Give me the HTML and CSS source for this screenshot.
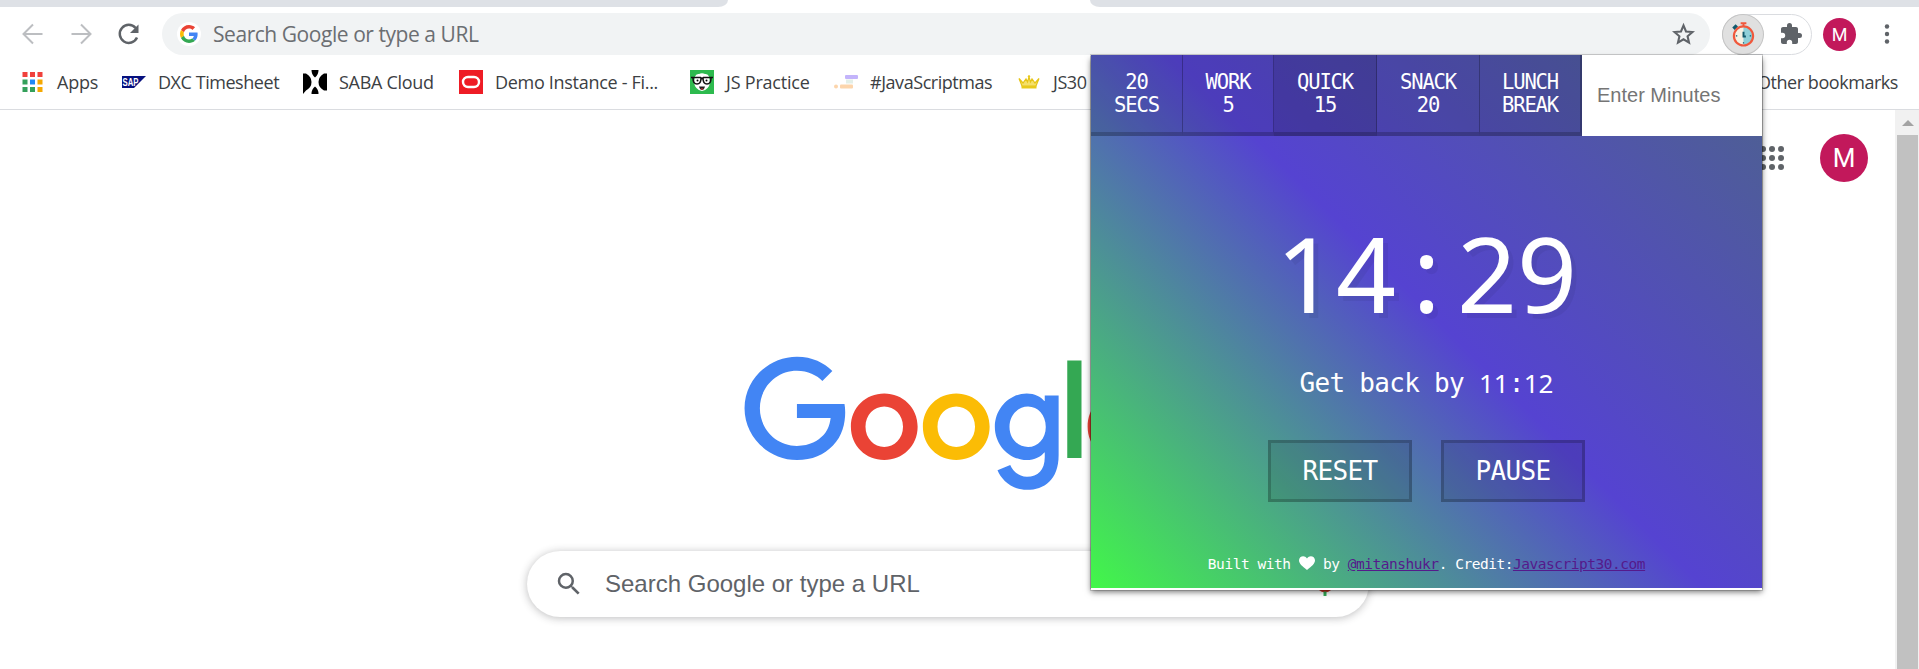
FILE: index.html
```
<!DOCTYPE html>
<html lang="en">
<head>
<meta charset="utf-8">
<title>New Tab</title>
<link rel="stylesheet" href="styles.css">
</head>
<body>
<div class="browser">
  <div class="tabs"><div class="tabs-left"></div><div class="tabs-right"></div></div>
  <div class="toolbar">
    <svg class="nav back" viewBox="0 0 24 24"><path d="M21.500 12H3M12 2.500 2.500 12l9.500 9.500" fill="none" stroke="#bcbec1" stroke-width="2"/></svg>
    <svg class="nav forward" viewBox="0 0 24 24"><path d="M2.500 12H21M12 2.500 21.500 12 12 21.500" fill="none" stroke="#bcbec1" stroke-width="2"/></svg>
    <svg class="nav reload" viewBox="0 0 24 24"><path d="M20 15.500A9 9 0 1 1 18.600 6" fill="none" stroke="#5f6368" stroke-width="2.500"/><path d="M21.500 2.500v8.500H13z" fill="#5f6368"/></svg>
    <div class="omnibox">
      <span class="gdisc"><svg viewBox="0 0 48 48"><path fill="#ea4335" d="M24 9.500c3.540 0 6.710 1.220 9.210 3.600l6.850-6.850C35.900 2.380 30.470 0 24 0 14.620 0 6.510 5.380 2.560 13.220l7.980 6.190C12.430 13.720 17.740 9.500 24 9.500z"/><path fill="#4285f4" d="M46.980 24.550c0-1.570-.15-3.090-.38-4.550H24v9.020h12.940c-.58 2.960-2.260 5.480-4.780 7.180l7.730 6c4.510-4.180 7.090-10.360 7.090-17.650z"/><path fill="#fbbc05" d="M10.530 28.590c-.48-1.450-.76-2.990-.76-4.590s.27-3.140.76-4.590l-7.980-6.190C.92 16.460 0 20.120 0 24s.92 7.540 2.560 10.780z"/><path fill="#34a853" d="M24 48c6.480 0 11.930-2.130 15.890-5.810l-7.730-6c-2.150 1.450-4.920 2.300-8.160 2.300-6.260 0-11.570-4.220-13.470-9.910l-7.980 6.190C6.510 42.620 14.620 48 24 48z"/></svg></span>
      <span class="omni-text">Search Google or type a URL</span>
      <svg class="star" viewBox="0 0 24 24"><path d="M12 3.300l2.400 5.800 6.200.5-4.700 4.100 1.400 6.100L12 16.600 6.700 19.800l1.400-6.100L3.400 9.600l6.200-.5z" fill="none" stroke="#5f6368" stroke-width="2"/></svg>
    </div>
    <div class="extensions">
      <span class="ext-active"><svg viewBox="0 0 24 26"><path d="M9 1.200h6M12 1v4" stroke="#f0583c" stroke-width="2"/><path d="M1.500 7 5 3.500" stroke="#115a6d" stroke-width="3.500"/><path d="M12 5a9.500 9.500 0 0 0 0 19z" fill="#f5f1e3"/><path d="M12 5a9.500 9.500 0 0 1 0 19z" fill="#8fd0d9"/><circle cx="12" cy="14.500" r="10" fill="none" stroke="#f0583c" stroke-width="2.300"/><path d="M12 10v5h2.500" stroke="#115a6d" stroke-width="2" fill="none"/><path d="M4 14.500h1.500M18.500 14.500H20M12 21v1.500" stroke="#115a6d" stroke-width="1.300"/></svg></span>
      <svg class="puzzle" viewBox="0 0 24 24"><path fill="#5f6368" d="M20.500 11H19V7c0-1.100-.9-2-2-2h-4V3.500a2.500 2.500 0 0 0-5 0V5H4c-1.100 0-2 .9-2 2v3.800h1.500a2.700 2.700 0 0 1 0 5.400H2V20c0 1.100.9 2 2 2h3.800v-1.500a2.700 2.700 0 0 1 5.400 0V22H17c1.100 0 2-.9 2-2v-4h1.500a2.500 2.500 0 0 0 0-5z"/></svg>
    </div>
    <span class="avatar small">M</span>
    <svg class="menu" viewBox="0 0 6 20"><circle cx="3" cy="2.500" r="2.200"/><circle cx="3" cy="10" r="2.200"/><circle cx="3" cy="17.500" r="2.200"/></svg>
  </div>
  <div class="bookmarks">
    <svg class="bi apps" viewBox="0 0 20 20"><path fill="#f0413c" d="M0 0h5v5H0zM7.500 0h5v5h-5zM15 0h5v5h-5z"/><path fill="#34a05a" d="M0 7.500h5v5H0zM0 15h5v5H0zM7.500 15h5v5h-5z"/><path fill="#1e88f5" d="M7.500 7.500h5v5h-5z"/><path fill="#f5a800" d="M15 7.500h5v5h-5zM15 15h5v5h-5z"/></svg>
    <span class="bt b1">Apps</span>
    <svg class="bi sap" viewBox="0 0 24 12"><path fill="#06107e" d="M0 0h24L12 12H0z"/><text x="0.500" y="9.800" textLength="16" lengthAdjust="spacingAndGlyphs" fill="#fff" class="saptext">SAP</text></svg>
    <span class="bt b2">DXC Timesheet</span>
    <svg class="bi saba" viewBox="0 0 24 24"><path d="M0 3.500h3q5.500 3 5.500 8.500T3 20.500L0 24zM24 3.500h-3q-5.500 3-5.500 8.500t5.500 8.500h3zM8.500 0h7q0 5-3.500 7.500Q8.500 5 8.500 0zM8.500 24h7q0-5-3.500-7.500Q8.500 19 8.500 24z"/></svg>
    <span class="bt b3">SABA Cloud</span>
    <svg class="bi demo" viewBox="0 0 24 24"><path fill="#ee1c25" d="M0 0h24v24H0z"/><rect x="4" y="7" width="16" height="10" rx="5" fill="none" stroke="#fff" stroke-width="2.400"/></svg>
    <span class="bt b4">Demo Instance - Fi...</span>
    <svg class="bi jsp" viewBox="0 0 24 24"><path fill="#2dba4e" d="M0 0h24v24H0z"/><path fill="#fff" d="M5 6.500q1-3 4-2.500 3-1.500 6 0 3-.5 4 2.500l1 6q-1 7-8 8.500-7-1.500-8-8.500z"/><path d="M1 7.500h9.500l1.500 1 1.500-1H23M3 8q0 6 4 6t4-6M13 8q0 6 4 6t4-6" fill="none" stroke="#111" stroke-width="1.500"/><circle cx="7.500" cy="10.500" r="1"/><circle cx="16.500" cy="10.500" r="1"/><path d="M9 16.500h6q-1 3.500-3 3.500t-3-3.500z" fill="#222"/><path d="M10.500 18.500h3l-1.500 1.500z" fill="#e33"/></svg>
    <span class="bt b5">JS Practice</span>
    <svg class="bi jsm" viewBox="0 0 24 14"><rect x="11" y="0" width="13" height="4" rx="1" fill="#c3b4fb"/><rect x="12" y="4.500" width="7" height="4" fill="#e3efe8"/><rect x="6" y="9.500" width="13" height="4" rx="1" fill="#fcd5ac"/><circle cx="2" cy="11.500" r="2" fill="#fcd5ac"/></svg>
    <span class="bt b6">#JavaScriptmas</span>
    <svg class="bi crown" viewBox="0 0 24 14"><path d="M2 3.500 6 8l3-4 1.500 3L12 2l1.500 5L15 4l3 4 4-4.500-3 7.500H5z" fill="#f5e06a" stroke="#e6c416" stroke-width="1.200"/><path fill="#e9ca1c" d="M4.500 11h15v2.500h-15z"/><circle cx="12" cy="1.500" r="1.200" fill="#e9ca1c"/></svg>
    <span class="bt b7">JS30</span>
    <span class="bt other">Other bookmarks</span>
  </div>
  <div class="page">
    <div class="content">
      <div class="logo">
        <svg viewBox="0 0 272 92"><path fill="#ea4335" d="M115.750 47.180c0 12.770-9.990 22.180-22.250 22.180s-22.250-9.410-22.250-22.180C71.250 34.320 81.240 25 93.500 25s22.250 9.320 22.250 22.180zm-9.740 0c0-7.980-5.790-13.440-12.510-13.440S80.990 39.200 80.990 47.180c0 7.900 5.790 13.440 12.510 13.440s12.510-5.550 12.510-13.440z"/><path fill="#fbbc05" d="M163.750 47.180c0 12.770-9.990 22.180-22.250 22.180s-22.250-9.410-22.250-22.180c0-12.850 9.990-22.180 22.250-22.180s22.250 9.320 22.250 22.180zm-9.740 0c0-7.980-5.790-13.440-12.510-13.440s-12.510 5.460-12.510 13.440c0 7.900 5.790 13.440 12.510 13.440s12.510-5.550 12.510-13.440z"/><path fill="#4285f4" d="M209.750 26.340v39.820c0 16.380-9.660 23.070-21.080 23.070-10.750 0-17.220-7.190-19.660-13.070l8.480-3.530c1.510 3.610 5.210 7.870 11.170 7.870 7.310 0 11.840-4.510 11.840-13v-3.190h-.34c-2.180 2.690-6.380 5.040-11.680 5.040-11.090 0-21.250-9.660-21.250-22.090 0-12.520 10.160-22.260 21.250-22.260 5.290 0 9.490 2.350 11.680 4.960h.34v-3.610h9.250zm-8.560 20.920c0-7.810-5.210-13.520-11.840-13.520-6.720 0-12.350 5.710-12.350 13.520 0 7.730 5.630 13.360 12.350 13.360 6.630 0 11.840-5.630 11.840-13.360z"/><path fill="#34a853" d="M225 3v65h-9.500V3z"/><path fill="#ea4335" d="M262.020 54.480l7.560 5.040c-2.440 3.610-8.320 9.830-18.480 9.830-12.600 0-22.010-9.740-22.010-22.180 0-13.190 9.490-22.180 20.920-22.180 11.510 0 17.140 9.160 18.980 14.110l1.010 2.520-29.650 12.280c2.270 4.450 5.800 6.720 10.750 6.720 4.960 0 8.400-2.440 10.920-6.140z"/><path fill="#4285f4" d="M35.290 41.410V32H67c.31 1.640.47 3.580.47 5.680 0 7.060-1.930 15.790-8.150 22.010-6.050 6.300-13.780 9.660-24.020 9.660C16.320 69.350.36 53.890.36 34.910.36 15.930 16.320.47 35.300.47c10.500 0 17.980 4.120 23.600 9.490l-6.640 6.640c-4.030-3.780-9.490-6.720-16.970-6.720-13.860 0-24.700 11.170-24.700 25.030 0 13.860 10.840 25.030 24.700 25.030 8.990 0 14.110-3.610 17.390-6.890 2.660-2.660 4.410-6.460 5.100-11.650z"/></svg>
      </div>
      <div class="search">
        <svg class="glass" viewBox="0 0 24 24"><path fill="#5f6368" d="M15.500 14h-.79l-.28-.27A6.470 6.470 0 0 0 16 9.500 6.500 6.500 0 1 0 9.500 16c1.610 0 3.090-.59 4.230-1.570l.27.28v.79l5 4.990L20.490 19zm-6 0a4.500 4.500 0 1 1 0-9 4.500 4.500 0 0 1 0 9z"/></svg>
        <span class="search-text">Search Google or type a URL</span>
        <svg class="mic" viewBox="0 0 24 26"><path d="M5 13a7 7 0 0 0 14 0" fill="none" stroke="#d93025" stroke-width="3"/><path d="M12 20.500v4.500" stroke="#34a853" stroke-width="3"/></svg>
      </div>
      <svg class="grid" viewBox="0 0 22 24"><g fill="#5f6368"><circle cx="1" cy="3" r="3"/><circle cx="10" cy="3" r="3"/><circle cx="19" cy="3" r="3"/><circle cx="1" cy="12" r="3"/><circle cx="10" cy="12" r="3"/><circle cx="19" cy="12" r="3"/><circle cx="1" cy="21" r="3"/><circle cx="10" cy="21" r="3"/><circle cx="19" cy="21" r="3"/></g></svg>
      <span class="avatar big">M</span>
    </div>
    <div class="scrollbar"><div class="up"></div><div class="thumb"></div></div>
  </div>
</div>
<div class="popup">
  <div class="presets">
    <button class="preset p1"><span>20</span><span>SECS</span></button>
    <button class="preset p2"><span>WORK</span><span>5</span></button>
    <button class="preset p3"><span>QUICK</span><span>15</span></button>
    <button class="preset p4"><span>SNACK</span><span>20</span></button>
    <button class="preset p5"><span>LUNCH</span><span>BREAK</span></button>
    <input class="minutes" type="text" placeholder="Enter Minutes">
  </div>
  <div class="clock"><span>14</span><span class="colon">:</span><span>29</span></div>
  <div class="back-by">Get back by <span class="num">11</span><span class="ncolon">:</span><span class="num">12</span></div>
  <div class="actions"><button class="action">RESET</button><button class="action">PAUSE</button></div>
  <div class="credit">Built with <svg class="heart" viewBox="0 0 16 14"><path fill="#fff" d="M8 14C3 10 0 7.500 0 4.200 0 .2 5.500-1.600 8 2.400c2.500-4 8-2.200 8 1.800C16 7.500 13 10 8 14z"/></svg> by <a href="#">@mitanshukr</a>. Credit:<a href="#">Javascript30.com</a></div>
</div>
</body>
</html>
```
FILE: styles.css
```
* { box-sizing: border-box; }
body {
  margin: 0;
  height: 669px;
  overflow: hidden;
  position: relative;
  background: #fff;
  font-family: "Open Sans", sans-serif;
}
svg { display: block; flex: none; }
span, button { flex: none; white-space: nowrap; }

.browser { display: flex; flex-direction: column; height: 669px; }
.tabs { display: flex; justify-content: space-between; height: 7px; flex: none; }
.tabs-left { width: 728px; background: #dee1e6; border-bottom-right-radius: 10px 7px; }
.tabs-right { width: 829px; background: #dee1e6; border-bottom-left-radius: 10px 7px; }

.toolbar { display: flex; align-items: center; height: 48px; padding: 6px 0 0 21px; flex: none; }
.nav { width: 24px; height: 24px; }
.forward { margin-left: 24px; }
.reload { margin-left: 24px; }
.omnibox {
  display: flex;
  align-items: center;
  width: 1548px;
  height: 42px;
  margin-left: 21px;
  padding-left: 15px;
  border-radius: 21px;
  background: #f1f3f4;
}
.gdisc { display: flex; align-items: center; justify-content: center; width: 24px; height: 24px; border-radius: 50%; background: #fff; }
.gdisc svg { width: 18px; height: 18px; }
.omni-text { margin-left: 12px; font-size: 21px; letter-spacing: -0.450px; color: #6b6e72; }
.star { width: 25px; height: 25px; margin-left: auto; margin-right: 14px; }
.extensions {
  display: flex;
  align-items: center;
  width: 90px;
  height: 41px;
  margin-left: 12px;
  border: 1px solid #dadce0;
  border-radius: 21px;
}
.ext-active { display: flex; align-items: center; justify-content: center; width: 42px; height: 41px; margin-left: -1px; border: 1px solid #c4c4c4; border-radius: 50%; background: #e0e0e0; }
.ext-active svg { width: 23px; height: 25px; }
.puzzle { width: 24px; height: 24px; margin-left: 15px; }
.avatar { display: flex; align-items: center; justify-content: center; border-radius: 50%; background: #c2185b; color: #fff; font-family: Roboto, sans-serif; }
.small { width: 33px; height: 33px; margin-left: 11px; font-size: 18px; }
.menu { width: 6px; height: 20px; margin-left: 28px; fill: #5f6368; }

.bookmarks { display: flex; align-items: center; height: 55px; padding: 0 21px 0 22px; border-bottom: 1px solid #dadce0; flex: none; }
.bt { padding-bottom: 1px; font-size: 18px; color: #3c4043; letter-spacing: -0.450px; }
.bi { width: 24px; height: 24px; margin-right: 12px; }
.apps { width: 21px; height: 20px; margin-right: 14px; }
.sap { height: 12px; }
.saptext { font: bold 10px "Liberation Sans", sans-serif; }
.jsm, .crown { height: 14px; }
.b1 { width: 65px; letter-spacing: -0.200px; }
.b2 { width: 145px; }
.b3 { width: 120px; letter-spacing: -0.300px; }
.b4 { width: 195px; letter-spacing: -0.300px; }
.b5 { width: 108px; letter-spacing: -0.200px; }
.b6 { width: 147px; }
.other { margin-left: auto; }

.page { display: flex; flex: 1; min-height: 0; }
.content { flex: 1; position: relative; display: flex; flex-direction: column; align-items: flex-start; }
.logo { margin: 246px 0 0 744px; }
.logo svg { width: 408px; height: 138px; }
.search {
  display: flex;
  align-items: center;
  width: 842px;
  height: 66px;
  margin: 57px 0 0 527px;
  padding-left: 27px;
  border-radius: 33px;
  box-shadow: 0 1px 9px rgba(32, 33, 36, .3);
}
.glass { width: 30px; height: 30px; }
.search-text { margin-left: 21px; font: 24px "Liberation Sans", Arial, sans-serif; color: #5f6368; }
.mic { width: 24px; height: 26px; margin: 0 32px 0 auto; }
.grid { position: absolute; right: 111px; top: 36px; width: 22px; height: 24px; overflow: visible; }
.big { position: absolute; right: 27px; top: 24px; width: 48px; height: 48px; font-size: 26px; }
.scrollbar { display: flex; flex-direction: column; width: 24px; padding: 0 1px 0 2px; background: #f1f1f1; }
.up { height: 25px; flex: none; display: flex; align-items: center; justify-content: center; }
.up::before { content: ""; border: 6px solid transparent; border-top: 0; border-bottom-color: #a3a3a3; }
.thumb { flex: 1; background: #c1c1c1; }

.popup {
  position: absolute;
  left: 1091px;
  top: 55px;
  width: 671px;
  height: 533px;
  display: flex;
  flex-direction: column;
  color: #fff;
  font-family: "DejaVu Sans Mono", monospace;
  background: linear-gradient(45deg, #42f749 0%, #5543d1 51%, #4d628d 100%);
  box-shadow: 0 2px 0 #fff, 0 0 0 1px rgba(0, 0, 0, .16), 0 2px 0 1px rgba(0, 0, 0, .14), 0 4px 6px rgba(0, 0, 0, .55);
}
.presets { display: flex; height: 81px; flex: none; }
.preset {
  display: flex;
  flex-direction: column;
  align-items: center;
  height: 81px;
  padding: 16px 0 0;
  border: 0;
  border-right: 1px solid rgba(0, 0, 0, .25);
  border-bottom: 4px solid rgba(0, 0, 0, .2);
  background: rgba(0, 0, 0, .1);
  color: #fff;
  font: 20.500px/23px "DejaVu Sans Mono", monospace;
  letter-spacing: -1.150px;
}
.p1, .p2 { width: 92px; }
.p2 { width: 91px; }
.p3, .p4 { width: 103px; }
.p3 { background: rgba(0, 0, 0, .2); }
.p5 { width: 102px; border-right-width: 2px; }
.minutes { flex: 1; min-width: 0; padding: 0 15px; border: 0; border-radius: 0; outline: 0; background: #fff; font: 20px "Liberation Sans", Arial, sans-serif; }
.minutes::placeholder { color: #757575; }
.clock {
  display: flex;
  justify-content: center;
  height: 110px;
  margin-top: 82px;
  font: 105px/110px "Noto Sans", sans-serif;
  text-shadow: 5px 5px 0 rgba(0, 0, 0, .05);
}
.colon { width: 61px; text-align: center; }
.back-by { display: flex; justify-content: center; height: 40px; margin-top: 35px; font-size: 26px; line-height: 40px; letter-spacing: -0.700px; white-space: pre; }
.num { font-family: "Noto Sans", sans-serif; letter-spacing: 0; }
.ncolon { width: 15px; text-align: center; }
.actions { display: flex; justify-content: center; gap: 29px; margin-top: 37px; }
.action { width: 144px; height: 62px; padding: 0; border: 3px solid rgba(0, 0, 0, .2); background: rgba(0, 0, 0, .1); color: #fff; font: 26px "DejaVu Sans Mono", monospace; letter-spacing: -0.700px; }
.credit { margin-top: 51px; text-align: center; font-size: 14.500px; line-height: 22px; letter-spacing: -0.470px; white-space: nowrap; }
.credit a { color: #551a8b; }
.heart { display: inline-block; width: 16px; height: 14px; vertical-align: -1px; }
```
